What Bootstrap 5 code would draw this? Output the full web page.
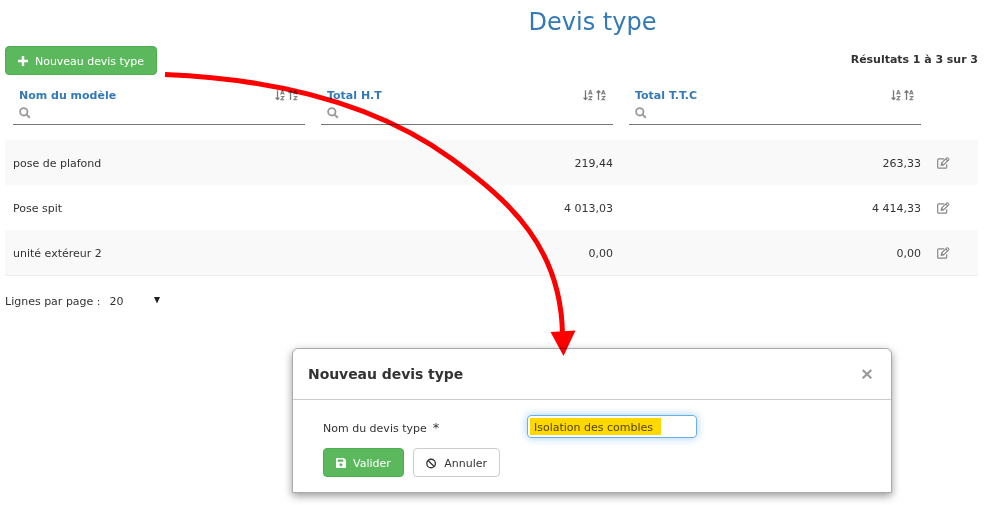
<!DOCTYPE html>
<html lang="fr">
<head>
<meta charset="utf-8">
<meta name="viewport" content="width=device-width, initial-scale=1">
<title>Devis type</title>
<link href="https://cdn.jsdelivr.net/npm/bootstrap@5.3.0/dist/css/bootstrap.min.css" rel="stylesheet">
<style>
body{font-family:Verdana,"DejaVu Sans",sans-serif;font-size:11px;line-height:15px;color:#333;background:#fff;height:505px;overflow:hidden;position:relative}
.page{padding:7px 9px 0 5px}
h1{font-size:24px;line-height:30px;color:#337ab7;font-weight:400;margin:0 0 9px;padding-left:202px}
.btn{font-size:11px;line-height:15px;padding:7px 12px 5px;border-radius:4px;height:29px;display:inline-flex;align-items:center;white-space:nowrap}
.btn svg{margin-right:7px;position:relative;top:-.5px}
.btn-success{--bs-btn-bg:#5cb85c;--bs-btn-border-color:#4cae4c}
.btn-new{width:152px;letter-spacing:-.03px}
.btn-valid{width:81px}
.btn-default{color:#333;border:1px solid #ccc;background:#fff;width:87px}
.btn-default svg{margin-right:8px}
.results{font-weight:700;padding-top:6px;letter-spacing:-.03px}
.grid-table{table-layout:fixed;margin:9px 0 0;font-size:11px;border-bottom:1px solid #eee;--bs-table-bg:transparent;color:#333}
.grid-table>:not(caption)>*>*{padding:0 8px;border:0;color:#333;box-shadow:none}
.grid-table thead th{height:56px;vertical-align:top}
.grid-table tbody td{height:45px;padding-top:2px;vertical-align:middle}
.grid-table tbody tr:nth-child(odd)>td{background:#f9f9f9}
.filter-box{height:41px;border-bottom:1px solid #757575;padding:4px 6px 0}
.filter-box .col-title{color:#337ab7;font-weight:700;line-height:15px}
.filter-box svg{display:block}
.sorts{gap:3px;padding-top:2px;margin-right:1px}
.w-edit{width:49px}
.edit-icon{display:block;margin-top:-1px}
.pager{margin-top:18px}
.pager .count{margin-left:9px}
.pager svg{margin-left:30px;margin-top:3px}
.dialog-box{position:absolute;left:292px;top:348px;width:600px;height:145px;background:#fff;border:1px solid #aaa;border-radius:6px 6px 0 0;box-shadow:0 3px 9px rgba(0,0,0,.4)}
.dialog-head{height:51px;border-bottom:1px solid #ccc;padding:0 18px 0 15px}
.dialog-title{font-size:14px;font-weight:700;line-height:20px;letter-spacing:-.06px}
.dialog-content{padding:15px 30px}
.name-label{width:204px;padding-top:3px}
.required-mark{font-size:13px;line-height:1;margin-left:6px}
.name-field{width:170px;height:23px;border:1px solid #66afe9;border-radius:4px;box-shadow:0 0 8px rgba(102,175,233,.6);padding:2px}
.highlighted{background:#ffd800;color:#4d4411;width:131px;height:17px;line-height:19px;padding-left:4px;white-space:nowrap}
.buttons{margin-top:10px;gap:9px}
.arrow-layer{position:absolute;left:0;top:0;mix-blend-mode:multiply;pointer-events:none}
</style>
</head>
<body>
<svg width="0" height="0" class="position-absolute" aria-hidden="true">
  <defs>
    <symbol id="loupe" viewBox="0 0 12 12"><circle cx="4.8" cy="4.8" r="3.7" fill="none" stroke="#999" stroke-width="1.8"/><path d="M7.6 7.6 10.8 10.8" stroke="#999" stroke-width="2"/></symbol>
    <symbol id="az" viewBox="0 0 5 11"><path d="M.6 4.6 2.1.6h.5L4.1 4.6M1.3 3.4h2.2M.8 6.5h3L1 9.7h3.1" fill="none" stroke="#858585" stroke-width="1.2"/></symbol>
    <symbol id="sort-down" viewBox="0 0 10 11"><path d="M2.5.3v8.5M.6 7.6l1.9 2 1.9-2" fill="none" stroke="#777" stroke-width="1.3"/><use href="#az" x="5" width="5" height="11"/></symbol>
    <symbol id="sort-up" viewBox="0 0 10 11"><path d="M2.5 10V1.5M.6 2.8l1.9-2 1.9 2" fill="none" stroke="#777" stroke-width="1.3"/><use href="#az" x="5" width="5" height="11"/></symbol>
    <symbol id="edit" viewBox="0 0 13 12"><path d="M7.2 1.9H1.6Q.7 1.9.7 2.8v7.5q0 .9.9.9h7.2q.9 0 .9-.9V7.2" fill="none" stroke="#888" stroke-width="1.2"/><path d="M4.2 8.4 4.6 6 9.8.9q.5-.4 1 0l.9.9q.4.5 0 1L6.5 8Z M8.8 2l1.8 1.8M4.8 6.2l1.6 1.6" fill="none" stroke="#888" stroke-width="1.1"/></symbol>
  </defs>
</svg>
<main class="page">
  <h1 class="text-center">Devis type</h1>
  <div class="d-flex justify-content-between align-items-start">
    <button type="button" class="btn btn-success btn-new"><svg width="10" height="10" viewBox="0 0 10 10"><path d="M5 0v10M0 5h10" stroke="#fff" stroke-width="2.4"/></svg>Nouveau devis type</button>
    <div class="results">Résultats 1 à 3 sur 3</div>
  </div>
  <table class="table grid-table">
    <thead>
      <tr>
        <th><div class="filter-box"><div class="d-flex justify-content-between"><span class="col-title">Nom du modèle</span><span class="d-flex sorts"><svg width="10" height="11"><use href="#sort-down"/></svg><svg width="10" height="11"><use href="#sort-up"/></svg></span></div><svg class="mt-1" width="12" height="12"><use href="#loupe"/></svg></div></th>
        <th><div class="filter-box"><div class="d-flex justify-content-between"><span class="col-title">Total H.T</span><span class="d-flex sorts"><svg width="10" height="11"><use href="#sort-down"/></svg><svg width="10" height="11"><use href="#sort-up"/></svg></span></div><svg class="mt-1" width="12" height="12"><use href="#loupe"/></svg></div></th>
        <th><div class="filter-box"><div class="d-flex justify-content-between"><span class="col-title">Total T.T.C</span><span class="d-flex sorts"><svg width="10" height="11"><use href="#sort-down"/></svg><svg width="10" height="11"><use href="#sort-up"/></svg></span></div><svg class="mt-1" width="12" height="12"><use href="#loupe"/></svg></div></th>
        <th class="w-edit"></th>
      </tr>
    </thead>
    <tbody>
      <tr><td>pose de plafond</td><td class="text-end">219,44</td><td class="text-end">263,33</td><td><svg class="edit-icon" width="13" height="12"><use href="#edit"/></svg></td></tr>
      <tr><td>Pose spit</td><td class="text-end">4 013,03</td><td class="text-end">4 414,33</td><td><svg class="edit-icon" width="13" height="12"><use href="#edit"/></svg></td></tr>
      <tr><td>unité extéreur 2</td><td class="text-end">0,00</td><td class="text-end">0,00</td><td><svg class="edit-icon" width="13" height="12"><use href="#edit"/></svg></td></tr>
    </tbody>
  </table>
  <div class="pager d-flex"><span>Lignes par page :</span><span class="count">20</span><svg width="6" height="7" viewBox="0 0 6 7"><path d="M0 0h6L3 6.5Z" fill="#222"/></svg></div>
</main>
<section class="dialog-box" role="dialog">
  <div class="dialog-head d-flex align-items-center justify-content-between">
    <span class="dialog-title">Nouveau devis type</span>
    <svg width="12" height="12" viewBox="0 0 12 12"><path d="M1.7 2 10.3 10.3M10.3 2 1.7 10.3" stroke="#999" stroke-width="2.1"/></svg>
  </div>
  <div class="dialog-content">
    <div class="d-flex align-items-center">
      <label class="name-label">Nom du devis type<span class="required-mark">*</span></label>
      <div class="name-field"><div class="highlighted">Isolation des combles</div></div>
    </div>
    <div class="d-flex buttons">
      <button type="button" class="btn btn-success btn-valid"><svg width="10" height="10" viewBox="0 0 10 10"><path fill-rule="evenodd" d="M1 0h7l2 2v7q0 1-1 1H1Q0 10 0 9V1Q0 0 1 0ZM1.7 1.5v2.3h5.6V1.5ZM5 5.2a1.6 1.6 0 1 0 .01 0Z" fill="#fff"/></svg>Valider</button>
      <button type="button" class="btn btn-default"><svg width="11" height="11" viewBox="0 0 11 11"><circle cx="5.5" cy="5.5" r="4.6" fill="none" stroke="#333" stroke-width="1.4"/><path d="m2.3 2.3 6.4 6.4" stroke="#333" stroke-width="1.4"/></svg>Annuler</button>
    </div>
  </div>
</section>
<svg class="arrow-layer" width="987" height="505" viewBox="0 0 987 505" aria-hidden="true">
  <path d="M165 74.500C275 79 375 103 452 159C511 202 561 248 562.500 334" fill="none" stroke="#f00" stroke-width="5"/>
  <path d="M550.5 332 575.5 330.5 563.5 356Z" fill="#f00"/>
</svg>
<script src="https://cdn.jsdelivr.net/npm/bootstrap@5.3.0/dist/js/bootstrap.bundle.min.js"></script>
</body>
</html>
